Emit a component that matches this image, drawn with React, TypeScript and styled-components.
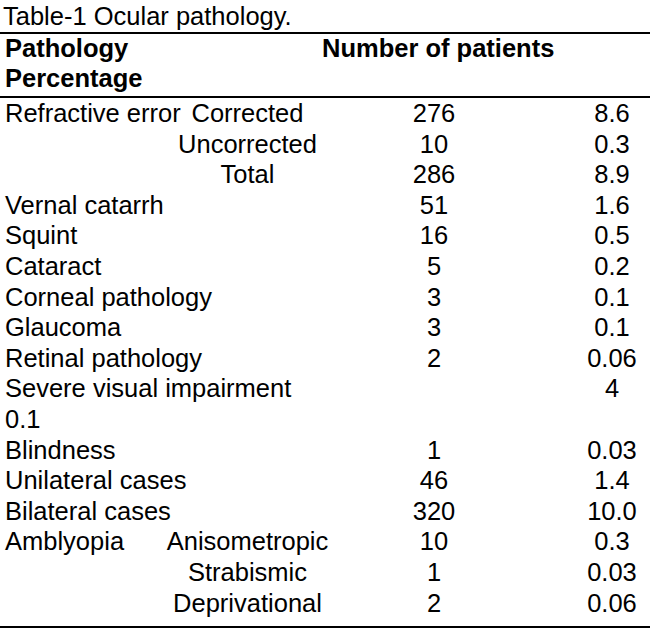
import React from "react";
import styled, { createGlobalStyle } from "styled-components";

const GlobalStyle = createGlobalStyle`
  html, body {
    margin: 0;
    padding: 0;
    background: #ffffff;
  }
  body {
    font-family: "Liberation Sans", Arial, Helvetica, sans-serif;
    color: #000000;
  }
`;

const Page = styled.div`
  width: 650px;
  font-size: 25.5px;
`;

const Caption = styled.div`
  line-height: 32px;
  padding-left: 3px;
  white-space: nowrap;
`;

const Table = styled.div`
  border-top: 2px solid #000;
  border-bottom: 2px solid #000;
  padding-bottom: 8px;
`;

const Head = styled.div`
  display: grid;
  grid-template-columns: 317px 1fr;
  padding-left: 5px;
  padding-bottom: 3px;
  border-bottom: 2px solid #000;
  font-weight: 700;
  line-height: 29.5px;
  white-space: nowrap;
`;

const HeadWide = styled.div`
  grid-column: 1 / -1;
`;

const Row = styled.div`
  display: grid;
  grid-template-columns: 155px 175px 198px 41px 1fr;
  padding-left: 5px;
  height: 30.6px;
  line-height: 30.6px;
  white-space: nowrap;
`;

const MainCell = styled.div<{ $span: boolean }>`
  grid-column: ${(p) => (p.$span ? "1 / 3" : "1 / 2")};
  overflow: visible;
`;

const SubCell = styled.div`
  grid-column: 2 / 3;
  text-align: center;
`;

const CountCell = styled.div`
  grid-column: 3 / 4;
  text-align: center;
`;

const PctCell = styled.div`
  grid-column: 5 / 6;
  text-align: center;
`;

type Item = {
  main?: string;
  sub?: string;
  count?: string;
  pct?: string;
};

const rows: Item[] = [
  { main: "Refractive error", sub: "Corrected", count: "276", pct: "8.6" },
  { sub: "Uncorrected", count: "10", pct: "0.3" },
  { sub: "Total", count: "286", pct: "8.9" },
  { main: "Vernal catarrh", count: "51", pct: "1.6" },
  { main: "Squint", count: "16", pct: "0.5" },
  { main: "Cataract", count: "5", pct: "0.2" },
  { main: "Corneal pathology", count: "3", pct: "0.1" },
  { main: "Glaucoma", count: "3", pct: "0.1" },
  { main: "Retinal pathology", count: "2", pct: "0.06" },
  { main: "Severe visual impairment", pct: "4" },
  { main: "0.1" },
  { main: "Blindness", count: "1", pct: "0.03" },
  { main: "Unilateral cases", count: "46", pct: "1.4" },
  { main: "Bilateral cases", count: "320", pct: "10.0" },
  { main: "Amblyopia", sub: "Anisometropic", count: "10", pct: "0.3" },
  { sub: "Strabismic", count: "1", pct: "0.03" },
  { sub: "Deprivational", count: "2", pct: "0.06" },
];

export default function App() {
  return (
    <Page>
      <GlobalStyle />
      <Caption>Table-1 Ocular pathology.</Caption>
      <Table>
        <Head>
          <div>Pathology</div>
          <div>Number of patients</div>
          <HeadWide>Percentage</HeadWide>
        </Head>
        {rows.map((r, i) => (
          <Row key={i}>
            {r.main !== undefined && (
              <MainCell $span={r.sub === undefined}>{r.main}</MainCell>
            )}
            {r.sub !== undefined && <SubCell>{r.sub}</SubCell>}
            {r.count !== undefined && <CountCell>{r.count}</CountCell>}
            {r.pct !== undefined && <PctCell>{r.pct}</PctCell>}
          </Row>
        ))}
      </Table>
    </Page>
  );
}
